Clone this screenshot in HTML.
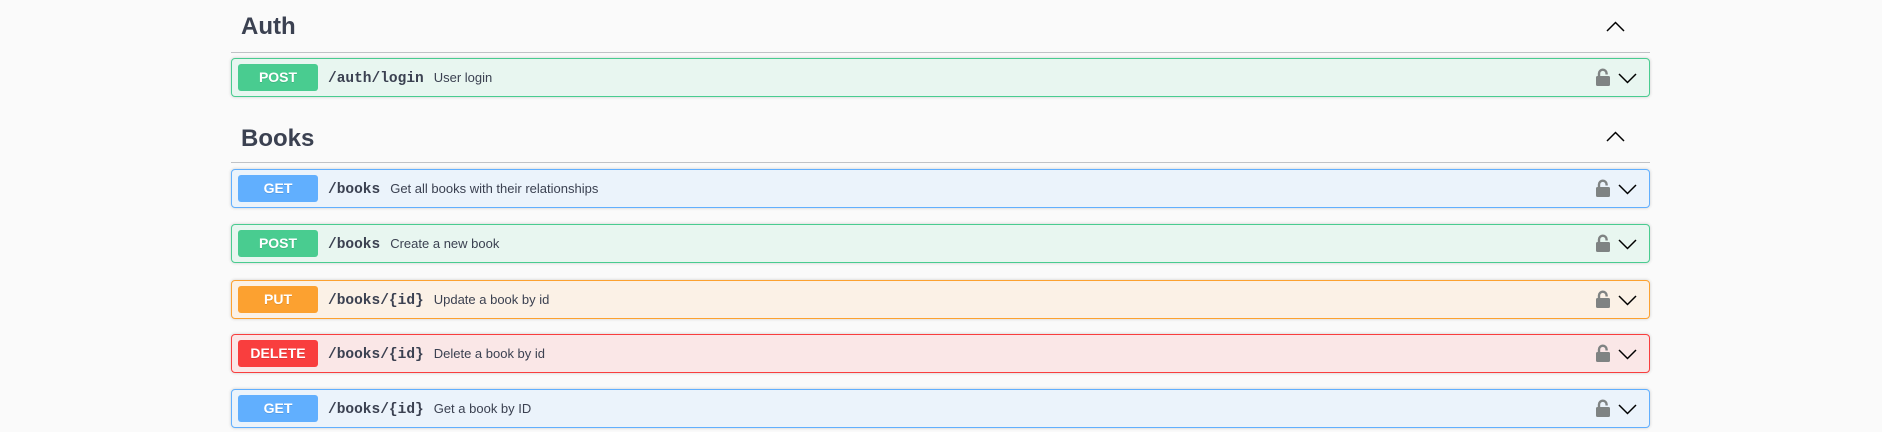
<!DOCTYPE html>
<html><head><meta charset="utf-8">
<style>
*{box-sizing:border-box;margin:0;padding:0}
html,body{width:1882px;height:432px;overflow:hidden;background:#fafafa;font-family:"Liberation Sans",Arial,sans-serif;color:#3b4151}
.h{position:absolute;left:231px;width:1419px;height:53px;border-bottom:1px solid rgba(59,65,81,.3)}
.h span{position:absolute;left:10px;font-size:24px;font-weight:bold;color:#3b4151}
.h svg{position:absolute;right:25px}
.op{position:absolute;left:231px;width:1419px;height:39px;border:1px solid;border-radius:4px;box-shadow:0 0 3px rgba(0,0,0,.19)}
.b{position:absolute;left:6px;top:5px;width:80px;height:27px;border-radius:3px;color:#fff;font-weight:bold;font-size:14px;text-align:center;line-height:27px;text-shadow:0 1px 0 rgba(0,0,0,.1)}
.p{position:absolute;left:96px;top:0;line-height:37px;font-family:"Liberation Mono","DejaVu Sans Mono",monospace;font-weight:bold;font-size:14.5px;color:#3b4151}
.d{font-family:"Liberation Sans",Arial,sans-serif;font-weight:normal;font-size:13px;margin-left:10px}
.lk{position:absolute;right:38px;top:8px}
.cv{position:absolute;right:12px;top:14px}
.post{border-color:#49cc90;background:#e8f6f0}.post .b{background:#49cc90}
.get{border-color:#61affe;background:#ebf3fb}.get .b{background:#61affe}
.put{border-color:#fca130;background:#fbf1e6}.put .b{background:#fca130}
.del{border-color:#f93e3e;background:#fae7e7}.del .b{background:#f93e3e}
</style></head><body>
<div class="h" style="top:0"><span style="top:13px">Auth</span><svg style="top:21px" width="19" height="11" viewBox="0 0 19 11"><path d="M1 10 L9.5 1.5 L18 10" fill="none" stroke="#000" stroke-width="1.5"/></svg></div>
<div class="h" style="top:110px"><span style="top:15px">Books</span><svg style="top:21px" width="19" height="11" viewBox="0 0 19 11"><path d="M1 10 L9.5 1.5 L18 10" fill="none" stroke="#000" stroke-width="1.5"/></svg></div>

<div class="op post" style="top:58px"><div class="b">POST</div><div class="p">/auth/login<span class="d">User login</span></div>
<svg class="lk" width="16" height="20" viewBox="0 0 16 20"><path d="M4 9 V6.5 A3.8 3.8 0 0 1 11.6 6.5 V7.5" fill="none" stroke="#7f8383" stroke-width="2.4"/><rect x="1" y="9" width="14" height="10" rx="1.5" fill="#7f8383"/></svg>
<svg class="cv" width="19" height="11" viewBox="0 0 19 11"><path d="M1 1 L9.5 9.5 L18 1" fill="none" stroke="#000" stroke-width="1.5"/></svg></div>

<div class="op get" style="top:169px"><div class="b">GET</div><div class="p">/books<span class="d">Get all books with their relationships</span></div>
<svg class="lk" width="16" height="20" viewBox="0 0 16 20"><path d="M4 9 V6.5 A3.8 3.8 0 0 1 11.6 6.5 V7.5" fill="none" stroke="#7f8383" stroke-width="2.4"/><rect x="1" y="9" width="14" height="10" rx="1.5" fill="#7f8383"/></svg>
<svg class="cv" width="19" height="11" viewBox="0 0 19 11"><path d="M1 1 L9.5 9.5 L18 1" fill="none" stroke="#000" stroke-width="1.5"/></svg></div>

<div class="op post" style="top:224px"><div class="b">POST</div><div class="p">/books<span class="d">Create a new book</span></div>
<svg class="lk" width="16" height="20" viewBox="0 0 16 20"><path d="M4 9 V6.5 A3.8 3.8 0 0 1 11.6 6.5 V7.5" fill="none" stroke="#7f8383" stroke-width="2.4"/><rect x="1" y="9" width="14" height="10" rx="1.5" fill="#7f8383"/></svg>
<svg class="cv" width="19" height="11" viewBox="0 0 19 11"><path d="M1 1 L9.5 9.5 L18 1" fill="none" stroke="#000" stroke-width="1.5"/></svg></div>

<div class="op put" style="top:280px"><div class="b">PUT</div><div class="p">/books/{id}<span class="d">Update a book by id</span></div>
<svg class="lk" width="16" height="20" viewBox="0 0 16 20"><path d="M4 9 V6.5 A3.8 3.8 0 0 1 11.6 6.5 V7.5" fill="none" stroke="#7f8383" stroke-width="2.4"/><rect x="1" y="9" width="14" height="10" rx="1.5" fill="#7f8383"/></svg>
<svg class="cv" width="19" height="11" viewBox="0 0 19 11"><path d="M1 1 L9.5 9.5 L18 1" fill="none" stroke="#000" stroke-width="1.5"/></svg></div>

<div class="op del" style="top:334px"><div class="b">DELETE</div><div class="p">/books/{id}<span class="d">Delete a book by id</span></div>
<svg class="lk" width="16" height="20" viewBox="0 0 16 20"><path d="M4 9 V6.5 A3.8 3.8 0 0 1 11.6 6.5 V7.5" fill="none" stroke="#7f8383" stroke-width="2.4"/><rect x="1" y="9" width="14" height="10" rx="1.5" fill="#7f8383"/></svg>
<svg class="cv" width="19" height="11" viewBox="0 0 19 11"><path d="M1 1 L9.5 9.5 L18 1" fill="none" stroke="#000" stroke-width="1.5"/></svg></div>

<div class="op get" style="top:389px"><div class="b">GET</div><div class="p">/books/{id}<span class="d">Get a book by ID</span></div>
<svg class="lk" width="16" height="20" viewBox="0 0 16 20"><path d="M4 9 V6.5 A3.8 3.8 0 0 1 11.6 6.5 V7.5" fill="none" stroke="#7f8383" stroke-width="2.4"/><rect x="1" y="9" width="14" height="10" rx="1.5" fill="#7f8383"/></svg>
<svg class="cv" width="19" height="11" viewBox="0 0 19 11"><path d="M1 1 L9.5 9.5 L18 1" fill="none" stroke="#000" stroke-width="1.5"/></svg></div>
</body></html>
